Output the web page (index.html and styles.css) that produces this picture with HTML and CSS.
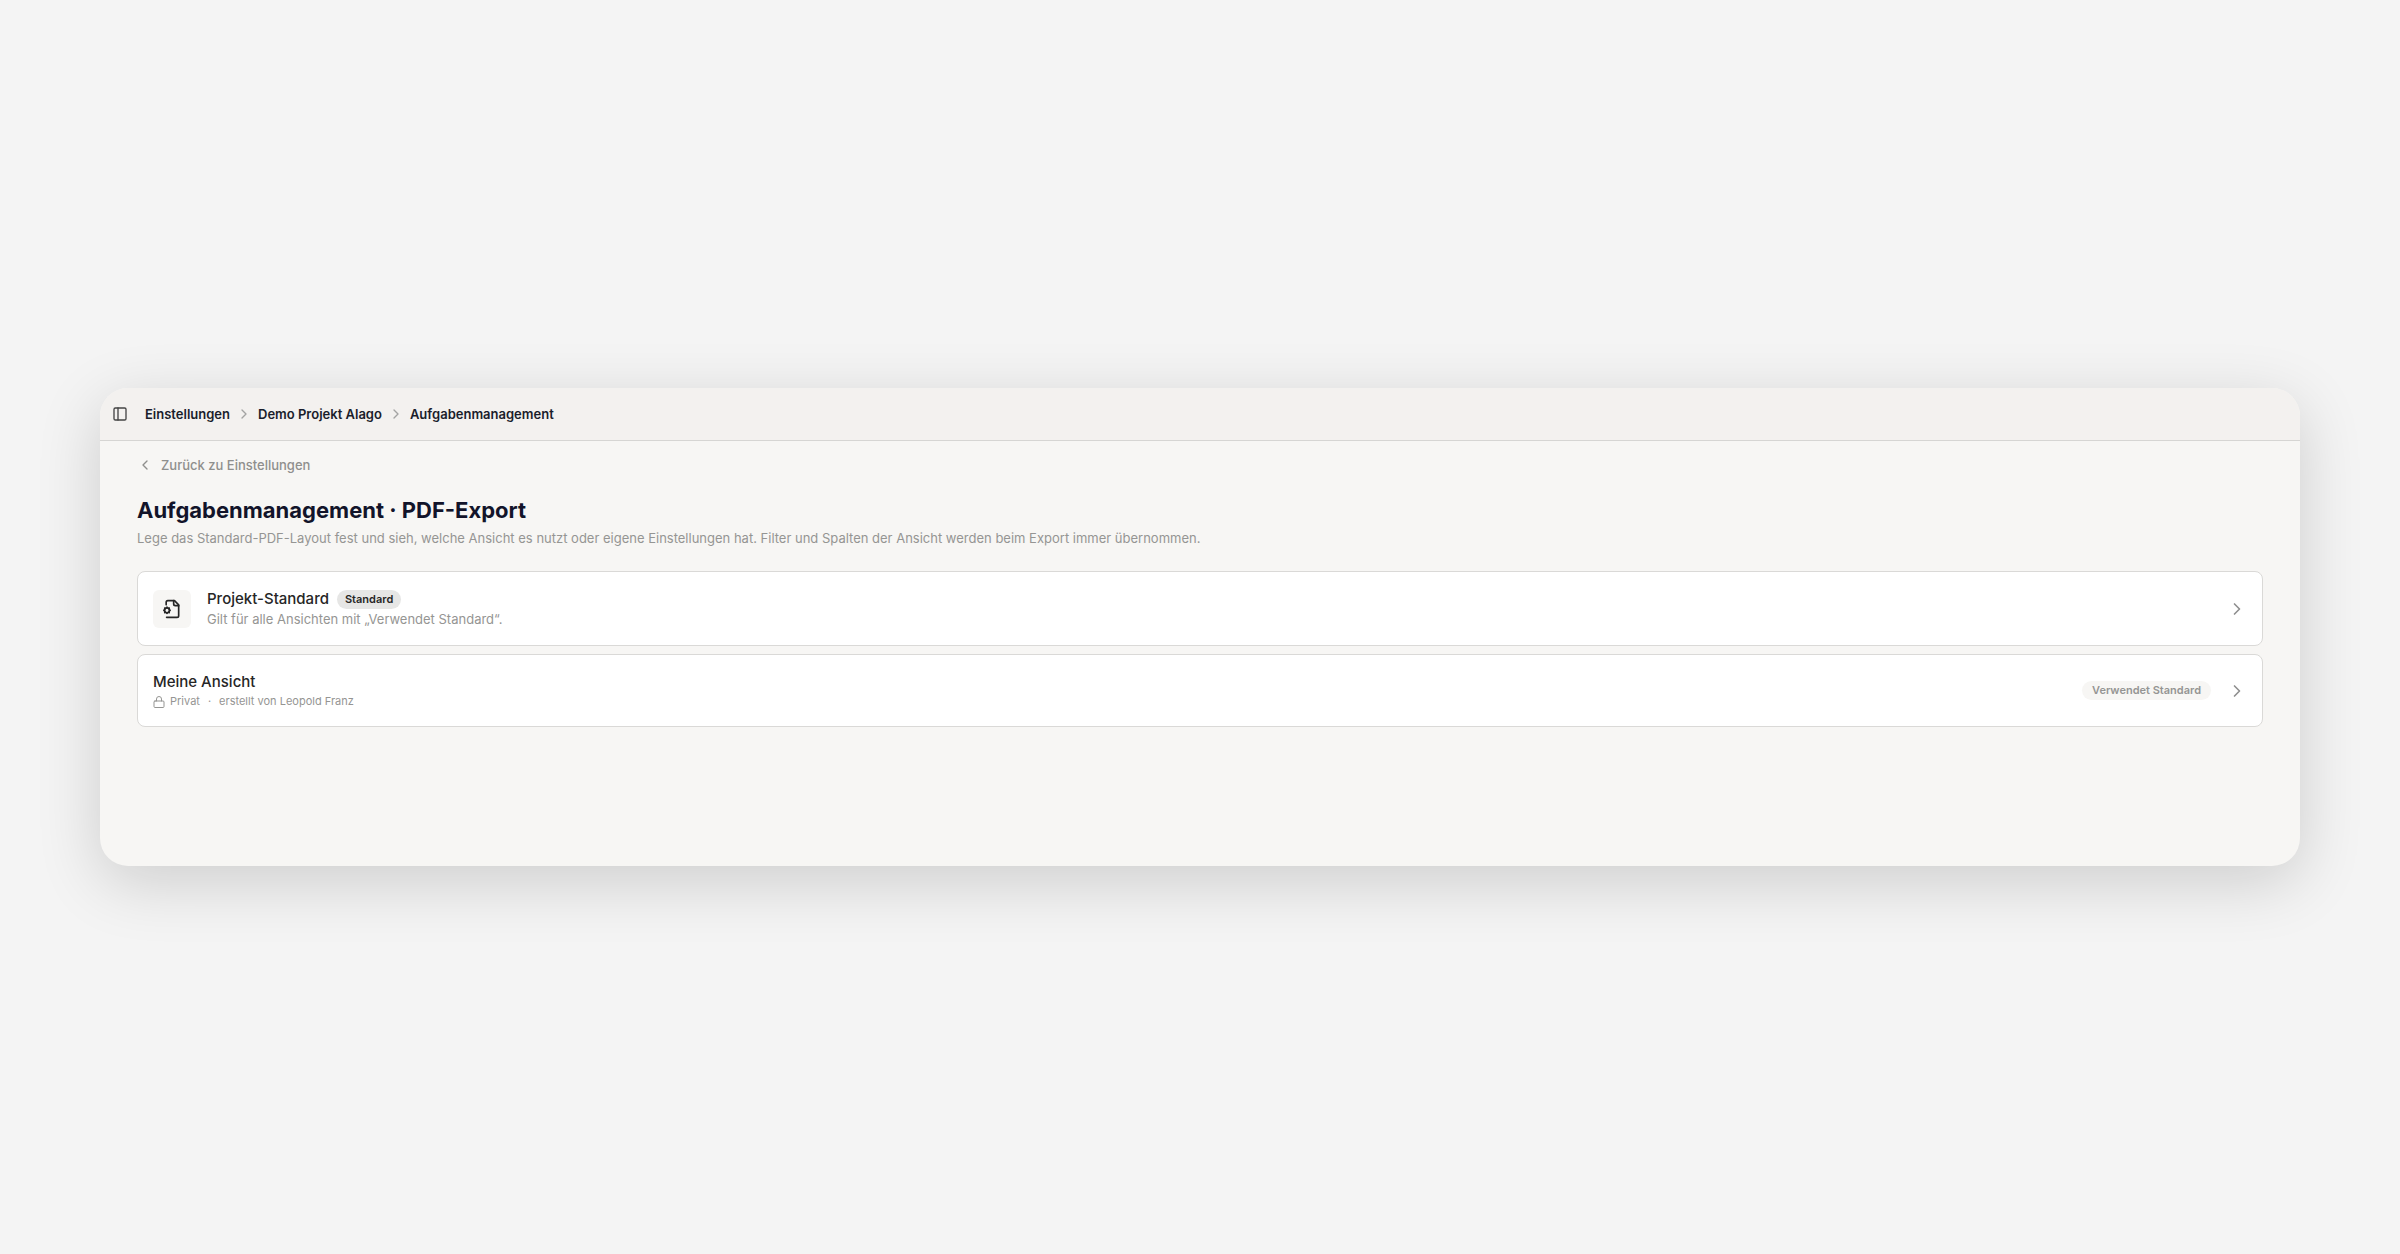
FILE: index.html
```html
<!DOCTYPE html>
<html lang="de">
<head>
  <meta charset="UTF-8" />
  <meta name="viewport" content="width=device-width, initial-scale=1.0" />
  <title>Aufgabenmanagement · PDF-Export</title>
  <link rel="stylesheet" href="styles.css">
</head>
<body>
  <div class="window">
    <header class="topbar">
      <button type="button" class="sidebar-toggle" aria-label="Seitenleiste umschalten">
        <svg class="icon" viewBox="0 0 24 24"><rect x="3" y="3" width="18" height="18" rx="2" /><path d="M9 3v18" /></svg>
      </button>
      <nav class="breadcrumb" aria-label="Breadcrumb">
        <a href="#">Einstellungen</a>
        <svg class="icon separator" viewBox="0 0 24 24"><path d="m9 18 6-6-6-6" /></svg>
        <a href="#">Demo Projekt Alago</a>
        <svg class="icon separator" viewBox="0 0 24 24"><path d="m9 18 6-6-6-6" /></svg>
        <a href="#">Aufgabenmanagement</a>
      </nav>
    </header>

    <main class="content">
      <a href="#" class="back">
        <svg class="icon" viewBox="0 0 24 24"><path d="m15 18-6-6 6-6" /></svg>
        Zurück zu Einstellungen
      </a>

      <h1>Aufgabenmanagement · PDF-Export</h1>
      <p class="intro">Lege das Standard-PDF-Layout fest und sieh, welche Ansicht es nutzt oder eigene Einstellungen hat. Filter und Spalten der Ansicht werden beim Export immer übernommen.</p>

      <div class="list">
        <a href="#" class="card">
          <span class="card-icon">
            <svg class="icon" viewBox="0 0 24 24">
              <path d="M5 7V4a2 2 0 0 1 2-2h8l5 5v13a2 2 0 0 1-2 2H5.5" />
              <path d="M14 2v4a2 2 0 0 0 2 2h4" />
              <circle cx="6" cy="13.6" r="3" />
              <path d="M6 9.8v.8M6 16.6v.8M9.8 13.6H9M3 13.6h-.8M8.7 10.9l-.6.6M3.9 15.7l-.6.6M8.7 16.3l-.6-.6M3.9 11.5l-.6-.6" />
            </svg>
          </span>
          <span class="card-text">
            <span class="card-title">Projekt-Standard <span class="badge">Standard</span></span>
            <span class="card-desc">Gilt für alle Ansichten mit „Verwendet Standard“.</span>
          </span>
          <svg class="icon chevron" viewBox="0 0 24 24"><path d="m9 18 6-6-6-6" /></svg>
        </a>

        <a href="#" class="card">
          <span class="card-text">
            <span class="card-title">Meine Ansicht</span>
            <span class="card-meta">
              <svg class="icon" viewBox="0 0 24 24"><rect x="2" y="10" width="20" height="13" rx="2" /><path d="M7 10V6a5 5 0 0 1 10 0v4" /></svg>
              <span>Privat</span>
              <span class="dot">·</span>
              <span>erstellt von Leopold Franz</span>
            </span>
          </span>
          <span class="badge badge-muted">Verwendet Standard</span>
          <svg class="icon chevron" viewBox="0 0 24 24"><path d="m9 18 6-6-6-6" /></svg>
        </a>
      </div>
    </main>
  </div>
</body>
</html>
```

FILE: styles.css
```css
* {
  box-sizing: border-box;
}

body {
  margin: 0;
  min-height: 100vh;
  padding: 0 100px;
  display: flex;
  align-items: center;
  background: #f4f4f4;
  color: #262626;
  font-family: Inter, "Liberation Sans", sans-serif;
  font-size: 13px;
}

a {
  color: inherit;
  text-decoration: none;
}

.icon {
  width: 16px;
  height: 16px;
  flex-shrink: 0;
  fill: none;
  stroke: currentColor;
  stroke-width: 2;
  stroke-linecap: round;
  stroke-linejoin: round;
}

.window {
  flex: 1;
  overflow: hidden;
  background: #f7f6f4;
  border-radius: 28px;
  box-shadow: 0 16px 64px rgba(0, 0, 0, 0.16);
}

/* top bar */
.topbar {
  display: flex;
  align-items: center;
  gap: 17px;
  height: 53px;
  padding: 0 12px;
  background: #f3f1ef;
  border-bottom: 1px solid #d6d5d3;
}

.sidebar-toggle {
  display: flex;
  padding: 0;
  border: none;
  background: none;
  color: #444;
  cursor: pointer;
}

.breadcrumb {
  display: flex;
  align-items: center;
  gap: 6px;
  color: #1a1d2b;
  font-weight: 600;
}

.separator {
  color: #a3a3a3;
}

/* page content */
.content {
  padding: 12px 37px 139px;
}

.back {
  display: flex;
  align-items: center;
  gap: 8px;
  width: fit-content;
  height: 24px;
  color: #8f8f8d;
  font-weight: 500;
}

h1 {
  margin: 18px 0 0;
  color: #12142a;
  font-size: 22px;
  line-height: 30px;
  font-weight: 700;
}

.intro {
  margin: 4px 0 24px;
  color: #959593;
  line-height: 18px;
}

.list {
  display: flex;
  flex-direction: column;
  gap: 8px;
}

.card {
  display: flex;
  align-items: center;
  gap: 16px;
  padding: 16px 15px;
  background: #fff;
  border: 1px solid #dad9d7;
  border-radius: 8px;
}

.card-icon {
  display: flex;
  align-items: center;
  justify-content: center;
  width: 38px;
  height: 38px;
  background: #f7f6f4;
  border-radius: 6px;
}

.card-icon .icon {
  width: 20px;
  height: 20px;
}

.card-text {
  flex: 1;
}

.card-title {
  display: flex;
  align-items: center;
  gap: 8px;
  font-size: 15px;
  line-height: 22px;
  font-weight: 500;
}

.card-desc {
  display: block;
  color: #959593;
  line-height: 19px;
}

.card-meta {
  display: flex;
  align-items: center;
  gap: 5px;
  color: #959593;
  font-size: 11px;
  line-height: 17px;
}

.card-meta .icon {
  width: 12px;
  height: 12px;
}

.dot {
  padding: 0 3px;
}

.badge {
  padding: 0 8px;
  border-radius: 10px;
  background: #e6e6e5;
  font-size: 11px;
  line-height: 19px;
  font-weight: 600;
}

.badge-muted {
  padding: 0 10px;
  background: #f7f6f4;
  color: #959593;
}

.chevron {
  width: 20px;
  height: 20px;
  color: #8f8f8f;
}
```
